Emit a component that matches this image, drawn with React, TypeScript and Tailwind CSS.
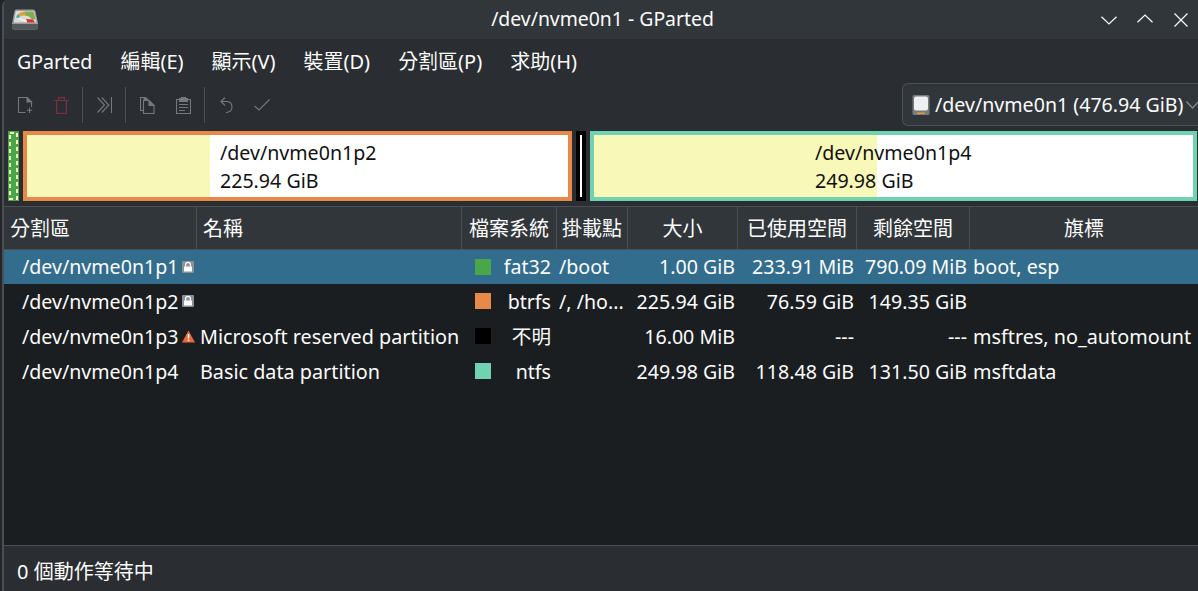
import React from "react";

const F = "font-['Noto_Sans','Noto_Sans_CJK_TC',sans-serif]";

function AppIcon() {
  return (
    <svg width="28" height="23" viewBox="0 0 28 23" className="shrink-0">
      <path d="M5 1.5 H22 Q24 1.5 24.5 3.5 L27 15.5 V19 Q27 21.5 25 21.5 H3 Q1 21.5 1 19 V15.5 L3.5 3.5 Q4 1.5 5 1.5Z" fill="#9a9d9b" />
      <path d="M1 16 H27 V19 Q27 21.5 25 21.5 H3 Q1 21.5 1 19Z" fill="#55585a" />
      <path d="M5.5 3 H22 Q23 3 23.5 4.5 L25.5 14.5 H2.8 L4.5 4.5 Q4.7 3 5.5 3Z" fill="#d9dcd8" />
      <path d="M14 3.5 H21.5 Q22.5 3.5 23 5 L24.5 11.5 L20.5 11.5 Q19.5 8 14 7.5Z" fill="#82ad4c" />
      <path d="M14 3.5 A11 9 0 0 0 7 6 L9 8.5 Q11 7.5 14 7.5Z" fill="#e2a03c" />
      <path d="M7 6 Q5.5 7.5 5 9.5 L7.5 10 Q8 9 9 8.5Z" fill="#4aa6a0" />
      <path d="M15 11 L22 11.5 L24 14.5 H16Z" fill="#d4342e" />
      <path d="M7 10 L16 12.5 L15.5 14 L7 11Z" fill="#f6f6f6" />
    </svg>
  );
}

const sw = { fill: "none", stroke: "#75797c", strokeWidth: 1.1 } as const;

function NewIcon() {
  return (
    <svg width="15" height="17" viewBox="0 0 15 17" {...sw}>
      <path d="M7.5 15.5 H.5 V.5 H9 L13.5 5 V10" />
      <path d="M9 .5 V5 H13.5Z" fill="#75797c" />
      <path d="M11.5 10.5 V16 M8.8 13.3 H14.2" />
    </svg>
  );
}
function TrashIcon() {
  return (
    <svg width="15" height="17" viewBox="0 0 15 17" fill="none" stroke="#7e2f3c" strokeWidth="1.2">
      <path d="M.2 3.5 H14.8 M4.5 3 V.6 H10.5 V3" />
      <path d="M2.6 3.5 V16.4 H12.4 V3.5" />
    </svg>
  );
}
function ApplyAllIcon() {
  return (
    <svg width="15" height="16" viewBox="0 0 15 16" {...sw}>
      <path d="M.5 .5 L7.5 8 L.5 15.5 M4.8 .5 L11.8 8 L4.8 15.5" />
      <path d="M14.5 0 V16" />
    </svg>
  );
}
function CopyIcon() {
  return (
    <svg width="15" height="17" viewBox="0 0 15 17" {...sw}>
      <path d="M3.5 13.5 H.5 V.5 H6" strokeWidth="1.2" />
      <path d="M3.5 16.5 V3.5 H9 L14 8.5 V16.5Z" />
      <path d="M9 3.5 V8.5 H14Z" fill="#75797c" />
      <path d="M3.5 .5 H6.5 L9 3.5 H3.5Z" fill="#75797c" stroke="none" />
    </svg>
  );
}
function PasteIcon() {
  return (
    <svg width="15" height="17" viewBox="0 0 15 17" {...sw}>
      <path d="M3.5 2.5 H.5 V16.5 H14.5 V2.5 H11.5" />
      <path d="M3.5 4.5 V1.5 H5.5 V.5 H9.5 V1.5 H11.5 V4.5Z" fill="#75797c" />
      <path d="M3 7.5 H12 M3 10.5 H12 M3 13.5 H9" />
    </svg>
  );
}
function UndoIcon() {
  return (
    <svg width="13" height="16" viewBox="0 0 13 16" {...sw}>
      <path d="M5 .5 L1 4.5 L5 8.5" />
      <path d="M1 4.5 H7 Q12 5 12 10 Q12 15 6 15.5" />
    </svg>
  );
}
function CheckIcon() {
  return (
    <svg width="16" height="12" viewBox="0 0 16 12" {...sw}>
      <path d="M.5 7 L5 11 L15.5 .5" />
    </svg>
  );
}
function ToolSep() {
  return <div className="w-px h-[36px] mx-[3px] bg-[#4a4f54]" />;
}
function Tool({ children }: { children: React.ReactNode }) {
  return <div className="w-[36px] h-[36px] flex items-center justify-center">{children}</div>;
}

function Lock() {
  return (
    <svg width="12" height="12" viewBox="0 0 12 12" className="shrink-0">
      <rect width="12" height="12" rx="1" fill="#8d9093" />
      <path d="M3.6 5.5 V3.8 a2.4 2.4 0 0 1 4.8 0 V5.5" fill="none" stroke="#fff" strokeWidth="1.2" />
      <rect x="2" y="5.5" width="8" height="5" fill="#fff" />
    </svg>
  );
}
function Warn() {
  return (
    <svg width="13" height="13" viewBox="0 0 13 13" className="shrink-0">
      <path d="M6.5 .5 L13 12.5 H0Z" fill="#e8683a" />
      <path d="M5.7 4 H7.3 V8.6 H5.7Z M5.7 9.6 H7.3 V11.2 H5.7Z" fill="#fff" />
    </svg>
  );
}

const cols = "grid grid-cols-[193px_265px_95px_71px_110px_119px_113px_1fr]";

type Row = {
  dev: string;
  icon?: "lock" | "warn";
  name: string;
  color: string;
  fs: string;
  mount: string;
  size: string;
  used: string;
  free: string;
  flags: string;
  sel?: boolean;
};

const rows: Row[] = [
  { dev: "/dev/nvme0n1p1", icon: "lock", name: "", color: "bg-[#4aa64a]", fs: "fat32", mount: "/boot", size: "1.00 GiB", used: "233.91 MiB", free: "790.09 MiB", flags: "boot, esp", sel: true },
  { dev: "/dev/nvme0n1p2", icon: "lock", name: "", color: "bg-[#e8894a]", fs: "btrfs", mount: "/, /ho...", size: "225.94 GiB", used: "76.59 GiB", free: "149.35 GiB", flags: "" },
  { dev: "/dev/nvme0n1p3", icon: "warn", name: "Microsoft reserved partition", color: "bg-black", fs: "不明", mount: "", size: "16.00 MiB", used: "---", free: "---", flags: "msftres, no_automount" },
  { dev: "/dev/nvme0n1p4", name: "Basic data partition", color: "bg-[#70d2b0]", fs: "ntfs", mount: "", size: "249.98 GiB", used: "118.48 GiB", free: "131.50 GiB", flags: "msftdata" },
];

const heads = ["分割區", "名稱", "檔案系統", "掛載點", "大小", "已使用空間", "剩餘空間", "旗標"];

export default function App() {
  return (
    <div className={`${F} w-[1198px] h-[591px] overflow-hidden flex bg-[#22262a] text-[#fcfcfc] text-[19.6px]`}>
      <div className="w-[2px] shrink-0" />
      <div className="flex-1 min-w-0 flex flex-col bg-[#2a2e32] border-l-[2px] border-[#4a4f54] rounded-tl-[6px] overflow-hidden">
        {/* title bar */}
        <div className="h-[39px] shrink-0 bg-[#31363b] flex items-center relative pl-[7px]">
          <AppIcon />
          <div className="absolute inset-0 flex items-center justify-center pl-[3px] pb-[2px] text-[19.4px]">/dev/nvme0n1 - GParted</div>
          <div className="ml-auto flex items-center pr-[10px] relative">
            <svg width="16" height="9" viewBox="0 0 16 9" fill="none" stroke="#fcfcfc" strokeWidth="1.2" className="mr-[20px] mt-[1px]"><path d="M.5 .7 L8 8 L15.5 .7" /></svg>
            <svg width="16" height="9" viewBox="0 0 16 9" fill="none" stroke="#fcfcfc" strokeWidth="1.2" className="mr-[21px] -mt-[3px]"><path d="M.5 8.3 L8 1 L15.5 8.3" /></svg>
            <svg width="14" height="14" viewBox="0 0 14 14" fill="none" stroke="#fcfcfc" strokeWidth="1.2"><path d="M.5 .5 L13.5 13.5 M13.5 .5 L.5 13.5" /></svg>
          </div>
        </div>
        {/* menu */}
        <div className="h-[46px] shrink-0 flex items-center pl-[13px] gap-[28px] text-[20px]">
          <span className="text-[19.6px]">GParted</span>
          {["編輯(E)", "顯示(V)", "裝置(D)", "分割區(P)", "求助(H)"].map((m) => (
            <span key={m}>{m}</span>
          ))}
        </div>
        {/* toolbar */}
        <div className="h-[46px] shrink-0 flex items-center pl-[3px] pb-[6px]">
          <Tool><NewIcon /></Tool>
          <Tool><TrashIcon /></Tool>
          <ToolSep />
          <Tool><ApplyAllIcon /></Tool>
          <ToolSep />
          <Tool><CopyIcon /></Tool>
          <Tool><PasteIcon /></Tool>
          <ToolSep />
          <Tool><UndoIcon /></Tool>
          <Tool><CheckIcon /></Tool>
          <div className="ml-auto mb-[1px] h-[43px] w-[296px] rounded-l-[6px] border border-[#4a4f54] border-r-0 bg-[#31363b] flex items-center pl-[9px] gap-[5px] whitespace-nowrap overflow-hidden">
            <svg width="18" height="22" viewBox="0 0 18 22" className="shrink-0">
              <rect width="17" height="20" x="0.5" y="1" rx="1.5" fill="#777b7d" />
              <rect x="2" y="2.5" width="14" height="14" rx="2" fill="#eeeff0" />
              <rect x="5" y="18.5" width="8" height="1.5" fill="#e09a3a" />
            </svg>
            <span>/dev/nvme0n1 (476.94 GiB)</span>
            <svg width="13" height="8" viewBox="0 0 13 8" fill="none" stroke="#8a8e91" strokeWidth="1.2" className="shrink-0 -ml-[3px]"><path d="M.5 .5 L6.5 7 L12.5 .5" /></svg>
          </div>
        </div>
        {/* partition map */}
        <div className="h-[75px] shrink-0 flex gap-[4px] pl-[4px] pr-[1px] items-start">
          <svg width="11" height="70" viewBox="0 0 11 70" className="shrink-0">
            <rect width="11" height="70" fill="#4aa64a" />
            <rect x="2" y="2" width="7" height="66" fill="none" stroke="#f8f8b8" strokeWidth="2" strokeDasharray="4 3" />
          </svg>
          <div className="w-[549px] h-[70px] shrink-0 border-[4px] border-[#e8894a] bg-white flex text-[#111] leading-[28px]">
            <div className="w-[183px] bg-[#f8f8b8]" />
            <div className="pl-[10px] pt-[4px]"><div>/dev/nvme0n1p2</div><div>225.94 GiB</div></div>
          </div>
          <div className="w-[10px] h-[70px] shrink-0 bg-black px-[4px] py-[4px]"><div className="w-full h-full bg-white" /></div>
          <div className="flex-1 h-[70px] border-[4px] border-[#70d2b0] bg-white flex relative text-[#111] leading-[28px]">
            <div className="w-[283px] bg-[#f8f8b8]" />
            <div className="absolute left-[221px] top-[4px]"><div>/dev/nvme0n1p4</div><div>249.98 GiB</div></div>
          </div>
        </div>
        {/* table */}
        <div className={`${cols} h-[44px] shrink-0 bg-[#31363b] border-t border-b border-[#4a4f54] text-[20px]`}>
          {heads.map((h, i) => (
            <div key={h} className={`flex items-center pt-[1px] border-r border-[#4a4f54] last:border-r-0 ${i < 2 ? "pl-[6px]" : "justify-center"}`}>
              {h}
            </div>
          ))}
        </div>
        <div className="flex-1 min-h-0 bg-[#1b1e20]">
          {rows.map((r) => (
            <div key={r.dev} className={`${cols} items-center whitespace-nowrap ${r.sel ? "h-[34px] bg-[#336d8e]" : "h-[35px]"}`}>
              <div className="flex items-center pl-[18px]">
                <span className="w-[160px]">{r.dev}</span>
                {r.icon === "lock" ? <Lock /> : r.icon === "warn" ? <Warn /> : null}
              </div>
              <div className="pl-[3px] text-[19.8px]">{r.name}</div>
              <div className="flex items-center pl-[13px] pr-[6px]">
                <div className={`w-[16px] h-[16px] ${r.color} shrink-0`} />
                <span className="ml-auto">{r.fs}</span>
              </div>
              <div className="pl-[2px]">{r.mount}</div>
              <div className="text-right pr-[3px]">{r.size}</div>
              <div className="text-right pr-[3px]">{r.used}</div>
              <div className="text-right pr-[3px]">{r.free}</div>
              <div className="pl-[3px] text-[19.8px]">{r.flags}</div>
            </div>
          ))}
        </div>
        {/* status */}
        <div className="h-[46px] shrink-0 border-t border-[#4a4f54] flex items-center pl-[13px] pt-[7px] text-[20px]">
          0 個動作等待中
        </div>
      </div>
    </div>
  );
}
